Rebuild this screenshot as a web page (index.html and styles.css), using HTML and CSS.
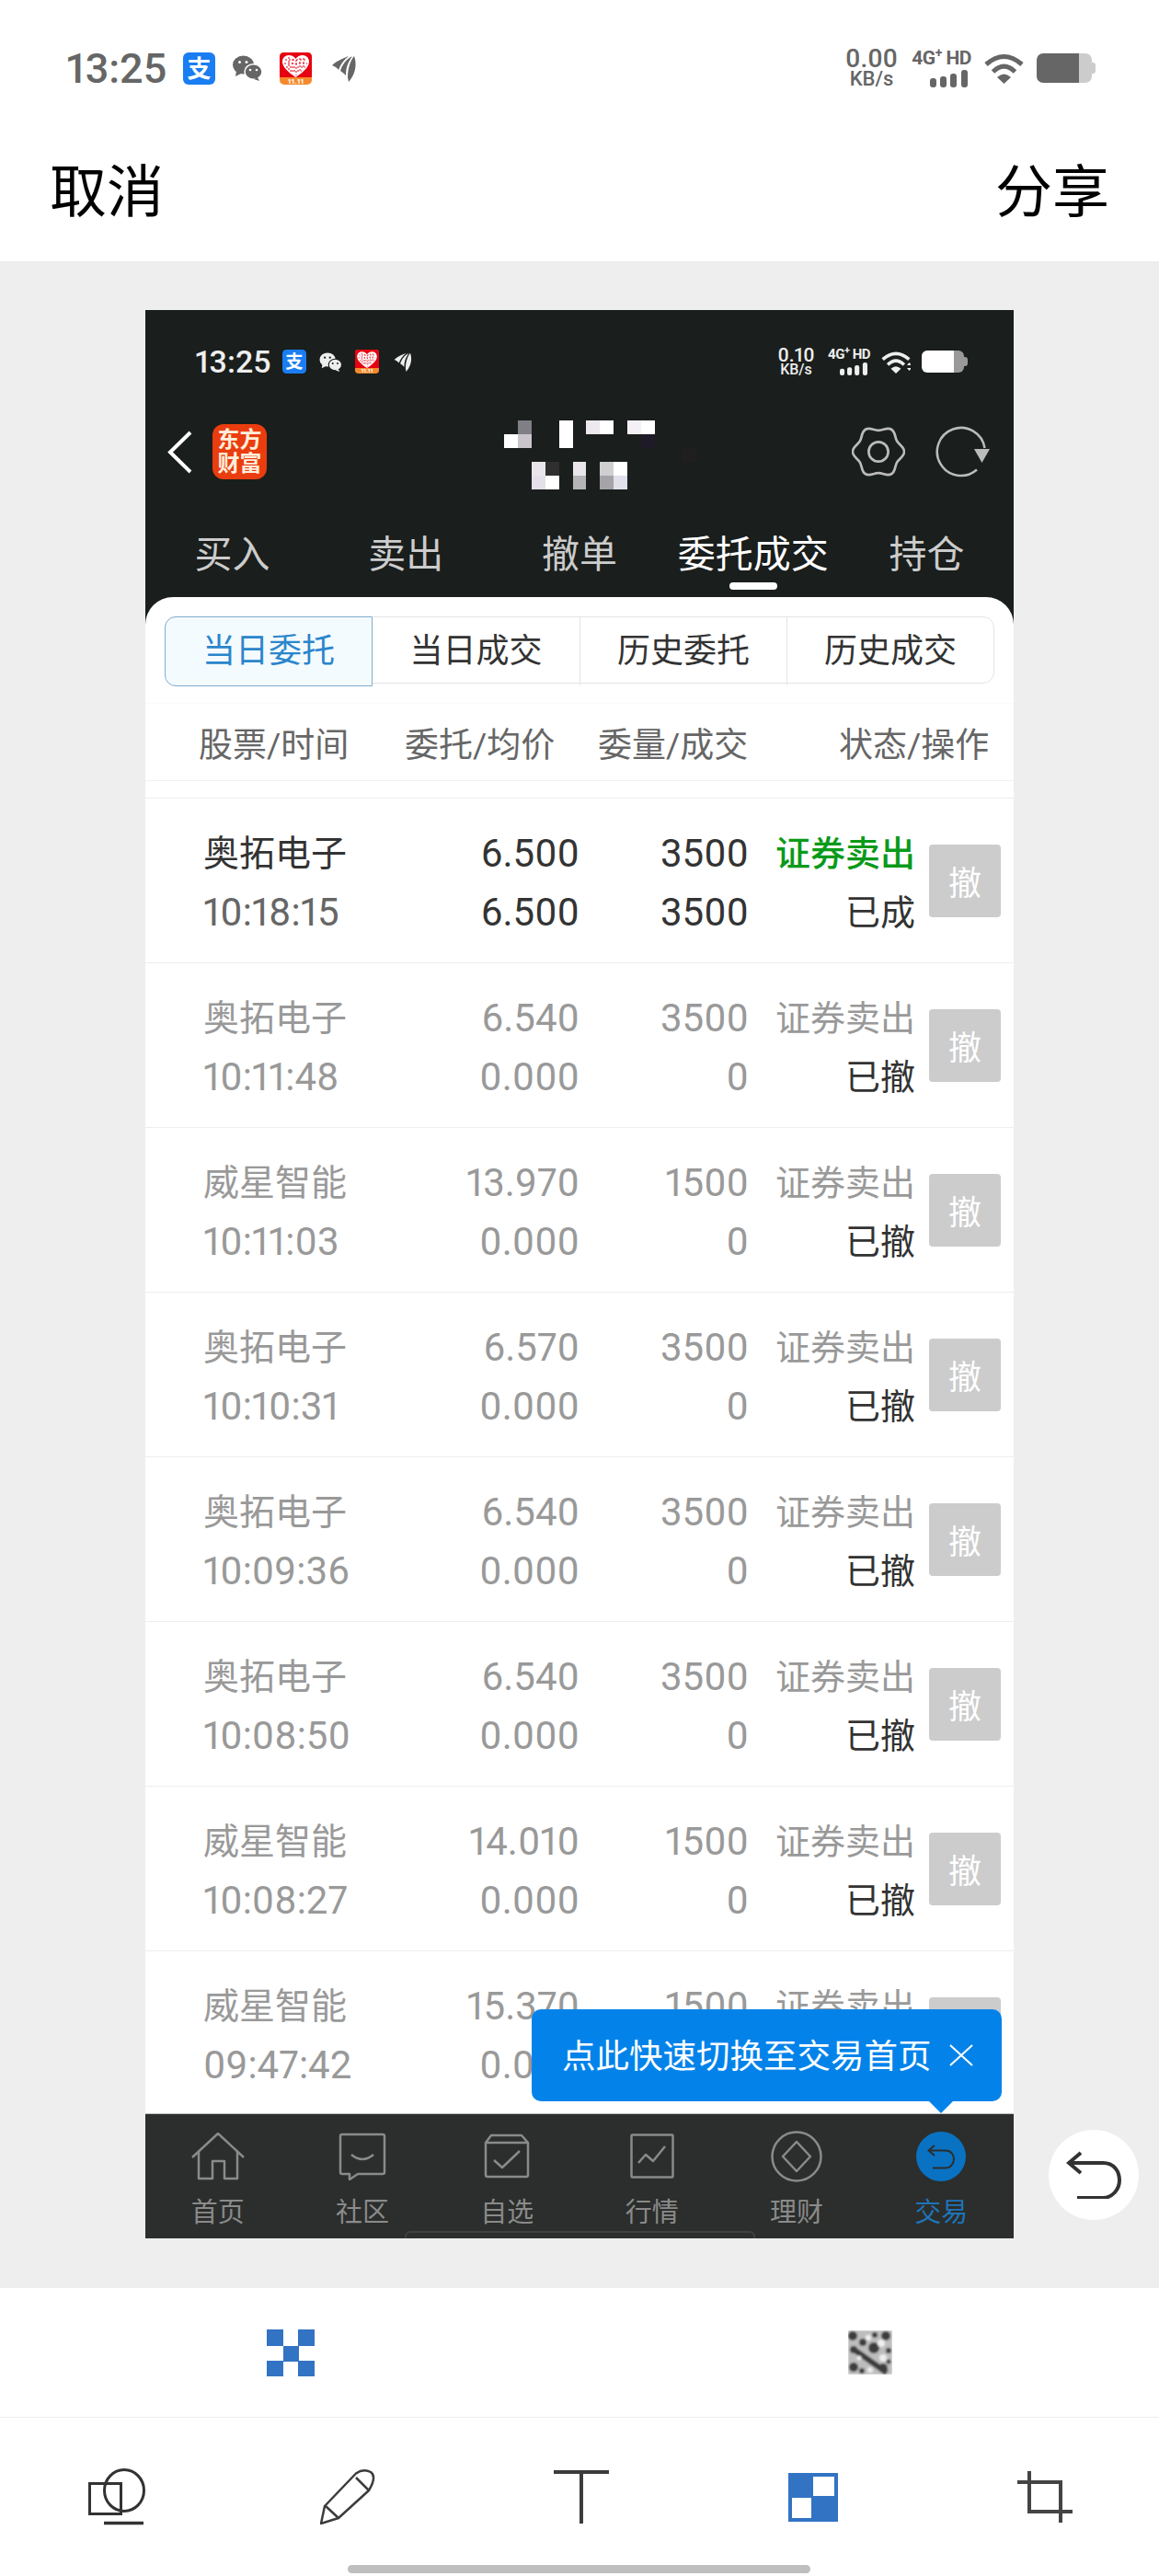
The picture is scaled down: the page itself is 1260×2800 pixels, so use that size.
FILE: index.html
```html
<!DOCTYPE html>
<html lang="zh-CN">
<head>
    <meta charset="UTF-8">
    <meta name="viewport" content="width=device-width, initial-scale=1.0">
    <title>分享截图</title>
    <link rel="stylesheet" href="styles.css">
</head>
<body>
    <!-- shared status bar icons -->
    <svg class="sprites" xmlns="http://www.w3.org/2000/svg">
        <symbol id="i-alipay" viewBox="0 0 35 35">
            <rect width="35" height="35" rx="6" fill="#1a7df2"/>
            <text x="17.5" y="27" text-anchor="middle" font-size="26" font-weight="700" fill="#fff" font-family="Noto Sans CJK SC">支</text>
        </symbol>
        <symbol id="i-wechat" viewBox="0 0 32 28">
            <ellipse cx="11.5" cy="10.5" rx="11.5" ry="10"/>
            <path d="M4 17l-1 6 6-3z"/>
            <ellipse cx="22.5" cy="18" rx="9.5" ry="8.3" stroke="var(--gap)" stroke-width="1.5"/>
            <path d="M27 24l2 4-6-2z"/>
            <circle cx="7.5" cy="7.5" r="1.5" fill="var(--gap)"/>
            <circle cx="15" cy="7.5" r="1.5" fill="var(--gap)"/>
            <circle cx="19" cy="16" r="1.3" fill="var(--gap)"/>
            <circle cx="26" cy="16" r="1.3" fill="var(--gap)"/>
        </symbol>
        <symbol id="i-heart" viewBox="0 0 35 35">
            <rect width="35" height="35" rx="5" fill="#f58a2c"/>
            <path d="M0 5q0-5 5-5h25q5 0 5 5v22H0z" fill="#e60012"/>
            <path d="M17.500 27C9 21 3 16 3 10c0-4 3-7 7-7 3 0 6 1.500 7.500 4 1.500-2.500 4.500-4 7.500-4 4 0 7 3 7 7 0 6-6 11-14.500 17z" fill="#fff"/>
            <path d="M6 8h23M5 12h25M7 16h21M11 20h13M10 5v15M14 7v16M18 8v17M22 6v16M26 6v10" stroke="#e60012" stroke-width="1" stroke-dasharray="2 2" fill="none"/>
            <text x="17.5" y="34" text-anchor="middle" font-size="8" font-weight="700" fill="#fff" font-family="Roboto">11.11</text>
        </symbol>
        <symbol id="i-feather" viewBox="0 0 26 29">
            <path d="M0 11C5 6 13 3 18 1 13 5 9 10 7 16 5 13 2 12 0 11z"/>
            <path d="M9 17C11 10 16 4 22 1 18 7 15 12 15 22 13 20 11 18 9 17z"/>
            <path d="M17 24C17 14 20 6 24 1 27 9 26 20 18 29z"/>
        </symbol>
        <symbol id="i-wifi" viewBox="0 0 43 34">
            <g fill="none" stroke="currentColor" stroke-width="5">
                <path d="M2 13Q21.500-4 41 13"/>
                <path d="M9.500 21Q21.500 9 33.500 21"/>
            </g>
            <path d="M14 27Q21.500 20 29 27l-7.500 7z"/>
        </symbol>
        <symbol id="i-back" viewBox="0 0 60 52">
            <path d="M16 2L3 13l13 11M3 13h37c12 0 18 9 18 19s-8 19-18 19H12" fill="none" stroke="currentColor" stroke-width="4"/>
        </symbol>
    </svg>

    <header class="topbar">
        <div class="statusbar">
            <span class="clock">13:25</span>
            <svg class="ico ico-alipay"><use href="#i-alipay"/></svg>
            <svg class="ico ico-wechat"><use href="#i-wechat"/></svg>
            <svg class="ico ico-heart"><use href="#i-heart"/></svg>
            <svg class="ico ico-feather"><use href="#i-feather"/></svg>
            <div class="status-right">
                <div class="speed"><b>0.00</b><span>KB/s</span></div>
                <div class="net">
                    <span>4G<sup>+</sup> HD</span>
                    <svg class="bars" viewBox="0 0 41 19"><rect y="9" width="7" height="10" rx="3"/><rect x="11" y="7" width="7" height="12" rx="3"/><rect x="22" y="4" width="7" height="15" rx="3"/><rect x="34" width="7" height="19" rx="3"/></svg>
                </div>
                <svg class="ico-wifi"><use href="#i-wifi"/></svg>
                <span class="battery"></span>
            </div>
        </div>
        <div class="actions">
            <span>取消</span>
            <span>分享</span>
        </div>
    </header>

    <main class="stage">
        <section class="phone">
            <div class="statusbar statusbar-dark">
                <span class="clock">13:25</span>
                <svg class="ico ico-alipay"><use href="#i-alipay"/></svg>
                <svg class="ico ico-wechat"><use href="#i-wechat"/></svg>
                <svg class="ico ico-heart"><use href="#i-heart"/></svg>
                <svg class="ico ico-feather"><use href="#i-feather"/></svg>
                <div class="status-right">
                    <div class="speed"><b>0.10</b><span>KB/s</span></div>
                    <div class="net">
                        <span>4G<sup>+</sup> HD</span>
                        <svg class="bars" viewBox="0 0 41 19"><rect y="9" width="7" height="10" rx="3"/><rect x="11" y="7" width="7" height="12" rx="3"/><rect x="22" y="4" width="7" height="15" rx="3"/><rect x="34" width="7" height="19" rx="3"/></svg>
                    </div>
                    <svg class="ico-wifi"><use href="#i-wifi"/><path d="M28 16l2.500-3 2.500 3zM28 19l2.500 3 2.500-3z"/></svg>
                    <span class="battery"></span>
                </div>
            </div>

            <div class="titlebar">
                <svg class="chevron" viewBox="0 0 27 47"><path d="M25 2L3 23.500 25 45" fill="none" stroke="#fff" stroke-width="4"/></svg>
                <div class="logo"><span>东方</span><span>财富</span></div>
                <!-- account name, blanked out with blocks -->
                <svg class="mosaic" viewBox="0 0 209 75">
                    <rect x="15" width="15" height="15" fill="#807f85"/>
                    <rect y="15" width="15" height="15" fill="#fff"/>
                    <rect x="15" y="15" width="15" height="15" fill="#c9c5cb"/>
                    <rect x="60" width="15" height="30" fill="#fff"/>
                    <rect x="89" width="15" height="15" fill="#ece8ee"/>
                    <rect x="104" width="15" height="15" fill="#fff"/>
                    <rect x="134" width="15" height="15" fill="#f5f0f5"/>
                    <rect x="149" width="15" height="15" fill="#fff"/>
                    <rect x="149" y="15" width="15" height="15" fill="#1e1a28"/>
                    <rect x="194" y="30" width="15" height="15" fill="#201e1e"/>
                    <rect x="30" y="45" width="15" height="15" fill="#e9e5eb"/>
                    <rect x="45" y="45" width="15" height="15" fill="#2e2f2e"/>
                    <rect x="30" y="60" width="15" height="15" fill="#e4dfe8"/>
                    <rect x="45" y="60" width="15" height="15" fill="#fff"/>
                    <rect x="75" y="45" width="14" height="15" fill="#e9e5eb"/>
                    <rect x="75" y="60" width="14" height="15" fill="#b5b3b5"/>
                    <rect x="104" y="45" width="15" height="15" fill="#cfcfcf"/>
                    <rect x="119" y="45" width="15" height="15" fill="#fff"/>
                    <rect x="104" y="60" width="15" height="15" fill="#a5a3a7"/>
                    <rect x="119" y="60" width="15" height="15" fill="#dfe0ea"/>
                </svg>
                <svg class="gear" viewBox="0 0 60 60">
                    <path d="M59 30C59 35.500 53.550 37.200 50.800 42 48.050 46.800 49.260 52.350 44.500 55.100 39.740 57.850 35.500 54 30 54 24.500 54 20.260 57.850 15.500 55.100 10.740 52.350 11.950 46.800 9.200 42 6.450 37.200 1 35.500 1 30 1 24.500 6.450 22.800 9.200 18 11.950 13.200 10.740 7.650 15.500 4.900 20.260 2.150 24.500 6 30 6 35.500 6 39.740 2.150 44.500 4.900 49.260 7.650 48.050 13.200 50.800 18 53.550 22.800 59 24.500 59 30z" fill="none" stroke="#bbb" stroke-width="2.800"/>
                    <circle cx="30" cy="30" r="11" fill="none" stroke="#bbb" stroke-width="2.800"/>
                </svg>
                <svg class="refresh" viewBox="0 0 62 56">
                    <path d="M48 47.500A26 26 0 1 1 56.500 24" fill="none" stroke="#bbb" stroke-width="2.500"/>
                    <path d="M45 25h17l-8.500 15z" fill="#bbb"/>
                </svg>
            </div>

            <nav class="trade-tabs">
                <span>买入</span>
                <span>卖出</span>
                <span>撤单</span>
                <span class="on">委托成交</span>
                <span>持仓</span>
            </nav>

            <div class="panel">
                <div class="segment">
                    <span class="on">当日委托</span>
                    <span>当日成交</span>
                    <span>历史委托</span>
                    <span>历史成交</span>
                </div>

                <div class="thead">
                    <span>股票/时间</span>
                    <span>委托/均价</span>
                    <span>委量/成交</span>
                    <span>状态/操作</span>
                </div>

                <div class="orders">
                    <div class="order live">
                        <div class="c-name"><span>奥拓电子</span><span class="time">10:18:15</span></div>
                        <div class="c-num"><span>6.500</span><span>6.500</span></div>
                        <div class="c-num"><span>3500</span><span>3500</span></div>
                        <div class="c-state"><span class="side">证券卖出</span><span class="result">已成</span></div>
                        <button class="cancel">撤</button>
                    </div>
                    <div class="order">
                        <div class="c-name"><span>奥拓电子</span><span class="time">10:11:48</span></div>
                        <div class="c-num"><span>6.540</span><span>0.000</span></div>
                        <div class="c-num"><span>3500</span><span>0</span></div>
                        <div class="c-state"><span class="side">证券卖出</span><span class="result">已撤</span></div>
                        <button class="cancel">撤</button>
                    </div>
                    <div class="order">
                        <div class="c-name"><span>威星智能</span><span class="time">10:11:03</span></div>
                        <div class="c-num"><span>13.970</span><span>0.000</span></div>
                        <div class="c-num"><span>1500</span><span>0</span></div>
                        <div class="c-state"><span class="side">证券卖出</span><span class="result">已撤</span></div>
                        <button class="cancel">撤</button>
                    </div>
                    <div class="order">
                        <div class="c-name"><span>奥拓电子</span><span class="time">10:10:31</span></div>
                        <div class="c-num"><span>6.570</span><span>0.000</span></div>
                        <div class="c-num"><span>3500</span><span>0</span></div>
                        <div class="c-state"><span class="side">证券卖出</span><span class="result">已撤</span></div>
                        <button class="cancel">撤</button>
                    </div>
                    <div class="order">
                        <div class="c-name"><span>奥拓电子</span><span class="time">10:09:36</span></div>
                        <div class="c-num"><span>6.540</span><span>0.000</span></div>
                        <div class="c-num"><span>3500</span><span>0</span></div>
                        <div class="c-state"><span class="side">证券卖出</span><span class="result">已撤</span></div>
                        <button class="cancel">撤</button>
                    </div>
                    <div class="order">
                        <div class="c-name"><span>奥拓电子</span><span class="time">10:08:50</span></div>
                        <div class="c-num"><span>6.540</span><span>0.000</span></div>
                        <div class="c-num"><span>3500</span><span>0</span></div>
                        <div class="c-state"><span class="side">证券卖出</span><span class="result">已撤</span></div>
                        <button class="cancel">撤</button>
                    </div>
                    <div class="order">
                        <div class="c-name"><span>威星智能</span><span class="time">10:08:27</span></div>
                        <div class="c-num"><span>14.010</span><span>0.000</span></div>
                        <div class="c-num"><span>1500</span><span>0</span></div>
                        <div class="c-state"><span class="side">证券卖出</span><span class="result">已撤</span></div>
                        <button class="cancel">撤</button>
                    </div>
                    <div class="order">
                        <div class="c-name"><span>威星智能</span><span class="time">09:47:42</span></div>
                        <div class="c-num"><span>15.370</span><span>0.000</span></div>
                        <div class="c-num"><span>1500</span><span>0</span></div>
                        <div class="c-state"><span class="side">证券卖出</span><span class="result">已撤</span></div>
                        <button class="cancel">撤</button>
                    </div>
                </div>
            </div>

            <nav class="bottom-nav">
                <div class="nav-item">
                    <svg class="nav-ico" width="58" height="52" viewBox="0 0 58 52"><path d="M1 27L29 1l28 26M8 20v30h15V31h13v19h14V20"/></svg>
                    <span>首页</span>
                </div>
                <div class="nav-item">
                    <svg class="nav-ico" width="52" height="52" viewBox="0 0 52 52"><path d="M4 2h44q2 0 2 2v39q0 2-2 2H21l-9 6v-6H4q-2 0-2-2V4q0-2 2-2z"/><path d="M14 24q12 10 24 0"/></svg>
                    <span>社区</span>
                </div>
                <div class="nav-item">
                    <svg class="nav-ico" width="50" height="50" viewBox="0 0 50 50"><path d="M2 10L8 2h33l7 8M2 10h46v35q0 2-2 2H4q-2 0-2-2z"/><path d="M11 29l9 8 19-18"/></svg>
                    <span>自选</span>
                </div>
                <div class="nav-item">
                    <svg class="nav-ico" width="48" height="50" viewBox="0 0 48 50"><rect x="1.500" y="1.500" width="45" height="46" rx="1"/><path d="M9 32l8-9 8 7 13-16"/></svg>
                    <span>行情</span>
                </div>
                <div class="nav-item">
                    <svg class="nav-ico" width="56" height="56" viewBox="0 0 56 56"><circle cx="28" cy="28" r="26.500"/><path d="M28 12l15 16-15 16-15-16z"/></svg>
                    <span>理财</span>
                </div>
                <div class="nav-item on">
                    <span class="nav-badge"><svg><use href="#i-back"/></svg></span>
                    <span>交易</span>
                </div>
                <span class="nav-handle"></span>
            </nav>

            <div class="tip">
                <span>点此快速切换至交易首页</span>
                <svg class="tip-close" viewBox="0 0 26 24"><path d="M1 1l24 22M25 1L1 23" fill="none" stroke="#fff" stroke-width="2"/></svg>
            </div>
        </section>

        <button class="float-back"><svg><use href="#i-back"/></svg></button>
    </main>

    <footer class="toolbar">
        <div class="tool-row-top">
            <svg class="t-block" viewBox="0 0 52 51" fill="#3273c4">
                <rect width="18" height="18"/><rect x="34" width="18" height="18"/>
                <rect x="18" y="18" width="17" height="17"/>
                <rect y="34" width="18" height="17"/><rect x="34" y="34" width="18" height="17"/>
            </svg>
            <svg class="t-noise" viewBox="0 0 48 48">
                <defs><filter id="soft" x="0" y="0" width="1" height="1"><feGaussianBlur stdDeviation="1"/></filter></defs>
                <g filter="url(#soft)">
                    <rect width="48" height="48" fill="#bdbdbd"/>
                    <g fill="#3d3d3d">
                        <circle cx="5" cy="6" r="5"/><circle cx="16" cy="13" r="4"/><circle cx="29" cy="5" r="3"/><circle cx="41" cy="6" r="5"/>
                        <circle cx="6" cy="21" r="4"/><circle cx="28" cy="19" r="6"/><circle cx="44" cy="22" r="3"/>
                        <circle cx="6" cy="40" r="5"/><circle cx="15" cy="44" r="3"/><circle cx="38" cy="41" r="5"/><circle cx="44" cy="34" r="2.500"/>
                    </g>
                    <path d="M8 22L42 46" stroke="#3d3d3d" stroke-width="6"/>
                    <circle cx="22" cy="8" r="3" fill="#f2f2f2"/><circle cx="36" cy="14" r="4" fill="#f0f0f0"/><circle cx="38" cy="30" r="4" fill="#eee"/><circle cx="24" cy="43" r="3" fill="#eee"/><circle cx="12" cy="30" r="2.500" fill="#eee"/>
                </g>
            </svg>
        </div>
        <div class="tool-row">
            <svg class="t-shape" viewBox="0 0 62 62" fill="none" stroke="#333" stroke-width="3">
                <rect x="1.500" y="16.500" width="34" height="33"/>
                <ellipse cx="39" cy="24" rx="21.500" ry="22.500"/>
                <path d="M17 59.500h43" stroke-width="3.500"/>
            </svg>
            <svg class="t-pencil" viewBox="0 0 60 60" fill="none" stroke="#3c3c3c" stroke-width="2.500" stroke-linejoin="round">
                <path d="M1 59L5 40 39 4.500Q47-1 55 3 62 8 53 23L20 53z"/>
                <path d="M6 40l14 13M39 9l14 14"/>
            </svg>
            <svg class="t-text" viewBox="0 0 60 58" fill="none" stroke="#3c3c3c" stroke-width="4"><path d="M0 2h60M30 2v56"/></svg>
            <svg class="t-mosaic" viewBox="0 0 54 53">
                <rect width="54" height="53" fill="#3273c4"/>
                <rect x="27" y="4" width="23" height="21" fill="#fff"/>
                <rect x="4" y="27" width="21" height="22" fill="#fff"/>
            </svg>
            <svg class="t-crop" viewBox="0 0 60 56" fill="none" stroke="#444" stroke-width="4"><path d="M13 0v44h47M0 12h47v44"/></svg>
        </div>
        <span class="home-bar"></span>
    </footer>
</body>
</html>
```

FILE: styles.css
```css
* {
    box-sizing: border-box;
}

body {
    margin: 0;
    width: 1260px;
    height: 2800px;
    display: flex;
    flex-direction: column;
    font-family: Roboto, "Noto Sans CJK SC", sans-serif;
    font-variant-numeric: proportional-nums;
    background-color: #eee;
    color: #333;
}

svg {
    display: block;
    flex: none;
}

.sprites {
    display: none;
}

/* top of the sheet */
.topbar {
    background-color: #fff;
}

.statusbar {
    --gap: #fff;
    height: 148px;
    padding: 0 70px 0 72px;
    display: flex;
    align-items: center;
    color: #666;
    fill: #666;
}

.clock {
    width: 107px;
    margin-right: 20px;
    font-size: 45px;
    font-weight: 500;
    white-space: nowrap;
}

.ico-alipay,
.ico-heart {
    width: 35px;
    height: 35px;
}

.ico-wechat {
    width: 32px;
    height: 28px;
    margin: 0 19px;
}

.ico-feather {
    width: 26px;
    height: 29px;
    margin-left: 22px;
}

.status-right {
    margin-left: auto;
    display: flex;
    align-items: center;
    gap: 14px;
}

.speed {
    width: 57px;
    display: flex;
    flex-direction: column;
    align-items: center;
}

.speed b {
    font-size: 28px;
    font-weight: 500;
    line-height: 24px;
}

.speed span {
    font-size: 22px;
    font-weight: 500;
    line-height: 20px;
}

.net {
    width: 66px;
    display: flex;
    flex-direction: column;
    align-items: flex-end;
    gap: 3px;
}

.net span {
    font-size: 21px;
    font-weight: 700;
    letter-spacing: -0.5px;
    line-height: 20px;
    white-space: nowrap;
}

.net sup {
    font-size: 14px;
    line-height: 0;
}

.bars {
    width: 41px;
    height: 19px;
    margin-right: 4px;
}

.ico-wifi {
    width: 43px;
    height: 34px;
}

.battery {
    --level: #666;
    --rest: #ccc;
    position: relative;
    width: 60px;
    height: 32px;
    margin-right: 3px;
    border-radius: 7px;
    background: linear-gradient(90deg, var(--level) 77%, var(--rest) 77%);
}

.battery::after {
    content: "";
    position: absolute;
    right: -4px;
    top: 30%;
    width: 4px;
    height: 40%;
    border-radius: 0 3px 3px 0;
    background-color: var(--rest);
}

.actions {
    height: 136px;
    padding: 0 54px 24px;
    display: flex;
    justify-content: space-between;
    align-items: center;
    font-size: 62px;
    color: #000;
}

.stage {
    position: relative;
    flex: 1;
    padding: 53px 158px;
}

/* the shared screenshot */
.phone {
    position: relative;
    height: 2096px;
    display: flex;
    flex-direction: column;
    background-color: #1a1e1c;
}

.statusbar-dark {
    --gap: #1a1e1c;
    height: 112px;
    padding: 0 52px 0 54px;
    color: #eee;
    fill: #eee;
}

.statusbar-dark .clock {
    width: 80px;
    margin-right: 15px;
    font-size: 34px;
}

.statusbar-dark .ico-alipay,
.statusbar-dark .ico-heart {
    width: 26px;
    height: 26px;
}

.statusbar-dark .ico-wechat {
    width: 25px;
    height: 21px;
    margin: 0 14px;
}

.statusbar-dark .ico-feather {
    width: 20px;
    height: 21px;
    margin-left: 16px;
}

.statusbar-dark .status-right {
    gap: 12px;
}

.statusbar-dark .speed {
    width: 39px;
}

.statusbar-dark .speed b {
    font-size: 21px;
    line-height: 18px;
}

.statusbar-dark .speed span {
    font-size: 16px;
    line-height: 14px;
}

.statusbar-dark .net {
    width: 49px;
    gap: 1px;
}

.statusbar-dark .net span {
    font-size: 15px;
    line-height: 15px;
}

.statusbar-dark .net sup {
    font-size: 11px;
}

.statusbar-dark .bars {
    width: 30px;
    height: 14px;
    margin-right: 3px;
}

.statusbar-dark .ico-wifi {
    width: 32px;
    height: 25px;
}

.statusbar-dark .battery {
    --level: #fff;
    --rest: #999;
    width: 46px;
    height: 24px;
    margin-right: 2px;
    border-radius: 6px;
}

.titlebar {
    height: 84px;
    padding: 0 26px 0 24px;
    display: flex;
    align-items: center;
}

.chevron {
    width: 27px;
    height: 47px;
}

.logo {
    width: 59px;
    height: 60px;
    margin-left: 22px;
    border-radius: 12px;
    display: flex;
    flex-direction: column;
    align-items: center;
    justify-content: center;
    background-color: #ea3d0f;
    color: #ffeedd;
    font-size: 24px;
    font-weight: 700;
    line-height: 26px;
}

.mosaic {
    width: 209px;
    height: 75px;
    margin: 7px auto 0 258px;
}

.gear {
    width: 58px;
    height: 58px;
}

.refresh {
    width: 62px;
    height: 56px;
    margin-left: 30px;
}

.trade-tabs {
    position: relative;
    height: 116px;
    padding-top: 30px;
    display: grid;
    grid-template-columns: repeat(5, 1fr);
    text-align: center;
    font-size: 41px;
    line-height: 80px;
    white-space: nowrap;
    color: #ccc;
}

.trade-tabs .on {
    position: relative;
    color: #fff;
}

.trade-tabs .on::after {
    content: "";
    position: absolute;
    left: 50%;
    bottom: 8px;
    width: 52px;
    height: 8px;
    margin-left: -26px;
    border-radius: 4px;
    background-color: #fff;
}

/* order list */
.panel {
    flex: 1;
    min-height: 0;
    overflow: hidden;
    padding-top: 21px;
    border-radius: 30px 30px 0 0;
    background-color: #fff;
}

.segment {
    height: 73px;
    margin: 0 21px;
    display: grid;
    grid-template-columns: repeat(4, 1fr);
    border: 1px solid #e4e4e8;
    border-radius: 12px;
    font-size: 36px;
    line-height: 74px;
    text-align: center;
    color: #333;
}

.segment span + span {
    border-left: 1px solid #e4e4e8;
}

.segment .on {
    margin: -1px 0 -1px -1px;
    border: 1px solid #7fadcc;
    border-radius: 12px 0 0 12px;
    background-color: #f4fbff;
    color: #2b86cc;
}

.segment .on + span {
    border-left: 0;
}

.thead {
    height: 85px;
    margin-top: 21px;
    padding-left: 58px;
    display: grid;
    grid-template-columns: 224px 210px 262px 1fr;
    align-items: center;
    border-top: 1px solid #fafafa;
    border-bottom: 1px solid #f0f0f0;
    font-size: 37px;
    color: #666;
    white-space: nowrap;
}

.orders {
    margin-top: 18px;
    border-top: 1px solid #eee;
}

.order {
    height: 179px;
    padding-left: 63px;
    display: grid;
    grid-template-columns: 211px 198px 184px 181px 78px;
    align-items: center;
    border-bottom: 1px solid #eee;
    color: #999;
}

.order > div {
    padding-top: 6px;
    display: flex;
    flex-direction: column;
    line-height: 64px;
    white-space: nowrap;
}

.c-name {
    font-size: 39px;
}

.time {
    font-size: 42px;
}

.c-num {
    align-items: flex-end;
    font-size: 42px;
}

.c-state {
    align-items: flex-end;
    font-size: 38px;
}

.result {
    color: #333;
}

.cancel {
    width: 78px;
    height: 79px;
    margin: 0 0 0 15px;
    padding: 0;
    grid-column: 5;
    border: none;
    border-radius: 4px;
    background-color: #ccc;
    color: #fff;
    font-family: inherit;
    font-size: 36px;
}

.live {
    color: #333;
}

.live .time {
    color: #666;
}

.live .side {
    color: #0a9a1a;
    font-weight: 500;
}

/* bottom navigation */
.bottom-nav {
    position: relative;
    height: 136px;
    padding-top: 18px;
    display: grid;
    grid-template-columns: repeat(6, 1fr);
    overflow: hidden;
    border-top: 1px solid #bdbdbd;
    background-color: #2b2e2c;
    color: #8a8a8a;
    font-size: 29px;
}

.nav-item {
    display: grid;
    grid-template-rows: 56px auto;
    justify-items: center;
    align-items: center;
}

.nav-ico {
    fill: none;
    stroke: #8a8a8a;
    stroke-width: 2.5;
    stroke-linejoin: round;
}

.nav-item span:last-child {
    margin-top: 4px;
    line-height: 40px;
}

.nav-item.on {
    color: #1f74b8;
}

.nav-badge {
    width: 54px;
    height: 54px;
    display: flex;
    align-items: center;
    justify-content: center;
    border-radius: 50%;
    background-color: #0a72c2;
    color: #2b2e2c;
}

.nav-badge svg {
    width: 30px;
    height: 28px;
}

.nav-handle {
    position: absolute;
    left: 282px;
    bottom: -4px;
    width: 381px;
    height: 12px;
    border: 2px solid #3f4240;
    border-radius: 6px;
}

/* hint bubble above the trade tab */
.tip {
    position: absolute;
    right: 13px;
    bottom: 149px;
    width: 511px;
    height: 100px;
    padding: 0 31px 4px 33px;
    display: flex;
    align-items: center;
    justify-content: space-between;
    border-radius: 10px;
    background-color: #0383ea;
    color: #fff;
    font-size: 36.5px;
    white-space: nowrap;
}

.tip::after {
    content: "";
    position: absolute;
    left: 432px;
    top: 100px;
    border-style: solid;
    border-width: 13px 13px 0;
    border-color: #0383ea transparent transparent;
}

.tip-close {
    width: 26px;
    height: 24px;
    margin-top: 4px;
}

.float-back {
    position: absolute;
    left: 1140px;
    top: 2031px;
    width: 98px;
    height: 98px;
    padding: 0;
    display: flex;
    align-items: center;
    justify-content: center;
    border: none;
    border-radius: 50%;
    background-color: #fff;
    color: #333;
}

.float-back svg {
    width: 60px;
    height: 52px;
}

/* editor tools */
.toolbar {
    position: relative;
    height: 313px;
    background-color: #fff;
}

.tool-row-top {
    height: 141px;
    display: grid;
    grid-template-columns: repeat(2, 1fr);
    justify-items: center;
    align-items: center;
    border-bottom: 1px solid #eee;
}

.tool-row {
    height: 172px;
    display: grid;
    grid-template-columns: repeat(5, 1fr);
    justify-items: center;
    align-items: center;
}

.t-block {
    width: 52px;
    height: 51px;
    margin-left: 2px;
}

.t-noise {
    width: 48px;
    height: 48px;
    margin-left: 2px;
}

.t-shape {
    width: 62px;
    height: 62px;
    margin-left: 2px;
}

.t-pencil {
    width: 60px;
    height: 60px;
}

.t-text {
    width: 60px;
    height: 58px;
    margin-left: 4px;
}

.t-mosaic {
    width: 54px;
    height: 53px;
    margin-left: 3px;
}

.t-crop {
    width: 60px;
    height: 56px;
    margin-left: 4px;
}

.home-bar {
    position: absolute;
    left: 378px;
    bottom: 3px;
    width: 503px;
    height: 9px;
    border-radius: 5px;
    background-color: #bfbfbf;
}
```
